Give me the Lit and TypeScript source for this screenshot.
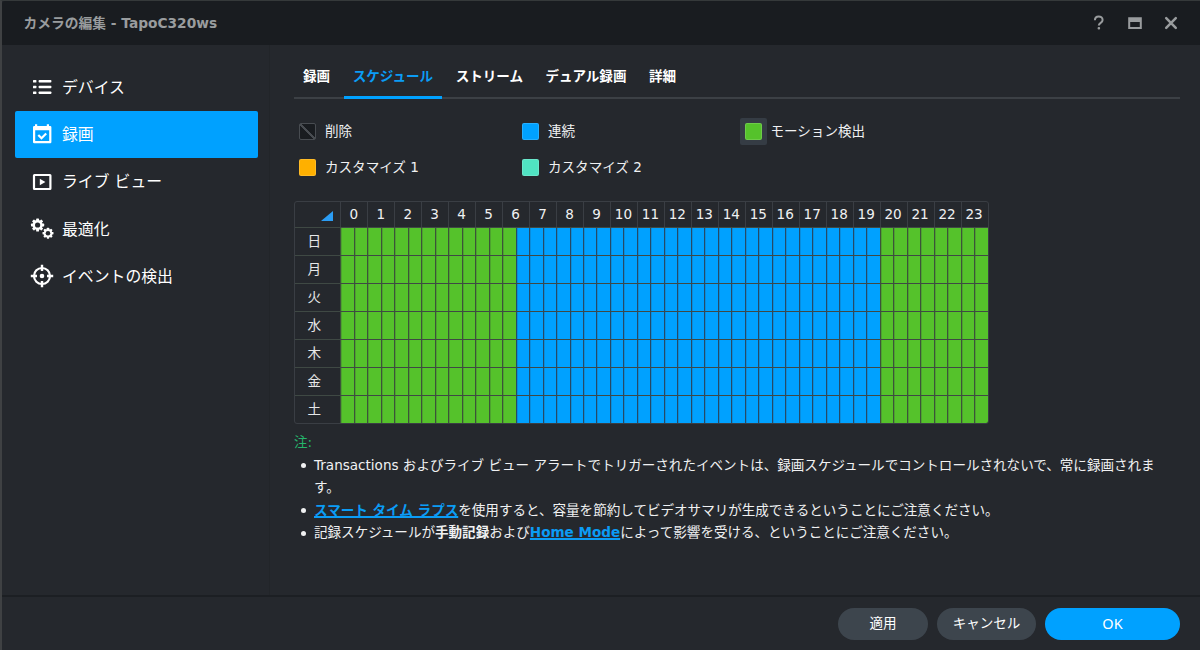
import { LitElement, html, svg, css } from "lit";
import { customElement } from "lit/decorators.js";
import { classMap } from "lit/directives/class-map.js";

const gear = (cx: number, cy: number, r: number, tooth: number, hole: number) => svg`
  <g transform="translate(${cx} ${cy})">
    ${[0, 45, 90, 135].map(
      (a) => svg`<rect x=${-tooth / 2} y=${-r} width=${tooth} height=${r * 2} rx="0.6" transform="rotate(${a})" fill="#fff"/>`
    )}
    <circle r=${r * 0.77} fill="#fff"/>
    <circle r=${hole} fill="#25282d"/>
  </g>`;

const icons = {
  device: svg`<g fill="#fff">
    ${[5, 10.7, 16.4].map((y) => svg`<rect x="3" y=${y} width="3.4" height="2.6" rx=".5"/><rect x="8.6" y=${y} width="12.8" height="2.6" rx=".8"/>`)}
  </g>`,
  record: svg`<path fill="#fff" fill-rule="evenodd" d="M5 2.300h2.200V4h9.600V2.300H19V4h1.200a1.200 1.200 0 0 1 1.200 1.200v14.800a1.200 1.200 0 0 1-1.200 1.200H4.200a1.200 1.200 0 0 1-1.200-1.200V5.200A1.200 1.200 0 0 1 4.200 4H5zM5.200 8.300v10.700h14V8.300z"/>
    <path d="M8.300 13l3.200 3.200 4.700-4.700" fill="none" stroke="#fff" stroke-width="2.200"/>`,
  live: svg`<rect x="4" y="5" width="16.400" height="14" rx=".4" fill="none" stroke="#fff" stroke-width="2.200"/>
    <path d="M9.800 8.700l5.600 3.300-5.600 3.300z" fill="#fff"/>`,
  tune: svg`${gear(7.600, 8, 6.600, 2.900, 2.600)}${gear(18, 16.200, 5.500, 2.400, 2.300)}`,
  detect: svg`<circle cx="12" cy="12" r="8" fill="none" stroke="#fff" stroke-width="2.200"/>
    <circle cx="12" cy="12" r="2.300" fill="#fff"/>
    <path d="M12 .8v6.200M12 17v6.200M.8 12H7M17 12h6.200" stroke="#fff" stroke-width="2.400"/>`,
};

const menu = [
  { icon: icons.device, label: "デバイス" },
  { icon: icons.record, label: "録画", active: true },
  { icon: icons.live, label: "ライブ ビュー" },
  { icon: icons.tune, label: "最適化" },
  { icon: icons.detect, label: "イベントの検出" },
];
const tabs = ["録画", "スケジュール", "ストリーム", "デュアル録画", "詳細"];
const legend = [
  { kind: "none", label: "削除" },
  { kind: "cont", label: "連続" },
  { kind: "motion", label: "モーション検出", active: true },
  { kind: "c1", label: "カスタマイズ 1" },
  { kind: "c2", label: "カスタマイズ 2" },
];
const days = ["日", "月", "火", "水", "木", "金", "土"];
const hours = Array.from({ length: 24 }, (_, i) => i);
const slots = Array.from({ length: 48 }, (_, i) => i);

@customElement("schedule-grid")
export class ScheduleGrid extends LitElement {
  static styles = css`
    :host { display: block; width: 694.500px; }
    .table { box-sizing: border-box; width: 694.500px; height: 223px; border: 1px solid #3a3e44; border-radius: 3px; overflow: hidden; display: grid; grid-template-rows: 25px repeat(7, 28px); }
    .row { display: grid; grid-template-columns: 45.300px 1fr; border-top: 1px solid #3f4944; box-sizing: border-box; }
    .row.head { border-top: 0; }
    .corner { display: flex; justify-content: flex-end; align-items: flex-end; padding: 0 7px 6px 0; }
    .hours { display: grid; grid-template-columns: repeat(24, 1fr); }
    .hour { border-left: 1px solid #3a3e44; display: flex; align-items: center; justify-content: center; color: #f0f1f2; padding: 0 1px 0 0; box-sizing: border-box; }
    .day { display: flex; align-items: center; padding: 0 0 1px 12.500px; color: #e6e7e8; }
    .slots { display: grid; grid-template-columns: repeat(48, 1fr); }
    .slot { border-left: 1px solid #3c5439; background: #55c22b; box-shadow: inset 1px 0 rgba(60, 90, 55, 0.3); }
    .slot.cont { background: #00a1ff; border-left-color: #264a66; box-shadow: inset 1px 0 rgba(40, 80, 110, 0.25); }
  `;
  render() {
    return html`<div class="table">
      <div class="row head">
        <div class="corner"><svg width="12" height="11" viewBox="0 0 12 11"><path d="M12 1v10H0z" fill="#2b9df4"/></svg></div>
        <div class="hours">${hours.map((h) => html`<div class="hour">${h}</div>`)}</div>
      </div>
      ${days.map((d) => html`<div class="row">
        <div class="day">${d}</div>
        <div class="slots">${slots.map((s) => html`<div class=${classMap({ slot: true, cont: s >= 13 && s < 40 })}></div>`)}</div>
      </div>`)}
    </div>`;
  }
}

@customElement("app-root")
export class AppRoot extends LitElement {
  static styles = css`
    :host { display: block; font: 13.56px/22.5px "DejaVu Sans", "Noto Sans CJK JP", sans-serif; color: #f0f1f2; }
    .window { box-sizing: border-box; width: 1200px; height: 650px; border-top: 1px solid #35393a; border-left: 2px solid #3f4143; background: #25282d; display: grid; grid-template-rows: 44px 550px 55px; overflow: hidden; white-space: nowrap; }
    .title { background: #191c20; display: flex; justify-content: space-between; align-items: center; padding: 0 21px 0 21.500px; color: #999c9e; font-weight: bold; border-top-left-radius: 3px; }
    .name { font-size: 13.75px; }
    .tools { display: flex; gap: 20px; }
    svg { display: block; }
    .body { display: grid; grid-template-columns: 268px 1fr; }
    .side { border-right: 1px solid #222529; padding: 18.500px 11px 0 13px; display: flex; flex-direction: column; gap: 0.300px; }
    .item { height: 47px; display: flex; align-items: center; gap: 8px; padding-left: 15px; font-size: 15.85px; border-radius: 2px; color: #fff; }
    .item span { padding-top: 2px; }
    .item.active { background: #00a1ff; }
    .main { padding: 20px 20px 0 24px; }
    .tabs { display: flex; gap: 4.600px; border-bottom: 2px solid #3c4045; height: 32px; }
    .tab { padding: 0 9px; font-weight: bold; color: #fff; height: 32px; box-sizing: border-box; }
    .tab.active { color: #0b9cf5; border-bottom: 3px solid #00a1ff; height: 34px; }
    .legend { display: grid; grid-template-columns: 223px 222.500px 1fr; grid-auto-rows: 36px; padding-top: 14px; }
    .entry { display: flex; align-items: center; gap: 4px; }
    .well { width: 27px; height: 27px; display: grid; place-items: center; border-radius: 2px; }
    .well.active { background: #353c44; }
    .swatch { width: 17px; height: 17px; border-radius: 2px; box-sizing: border-box; border: 1px solid rgba(255, 255, 255, 0.15); }
    .swatch.none { background: linear-gradient(45deg, transparent 46%, #484c51 46%, #484c51 54%, transparent 54%), #191c20; border-color: #484c51; }
    .swatch.cont { background: #00a1ff; }
    .swatch.motion { background: #55c22b; }
    .swatch.c1 { background: #ffb000; }
    .swatch.c2 { background: #50e3c2; }
    .sched { padding-top: 16px; }
    .note { padding-top: 7px; color: #25b56c; }
    .notes { margin: 0; padding: 0 0 0 7px; list-style: none; }
    .notes li { display: flex; gap: 8px; }
    .notes li::before { content: ""; width: 5px; height: 5px; border-radius: 50%; background: #f0f1f2; margin-top: 9.500px; flex: none; }
    .link { color: #0b9cf5; font-weight: bold; text-decoration: underline; text-decoration-thickness: 1.500px; }
    .foot { border-top: 2px solid #1c1f23; display: flex; justify-content: flex-end; align-items: flex-start; gap: 9px; padding: 11px 20px 0 0; }
    .btn { height: 32px; border: 0; border-radius: 16px; background: #3d454d; color: #fff; display: grid; place-items: center; padding: 0 0 2px; font: inherit; }
    .apply { width: 90px; }
    .cancel { width: 99px; }
    .ok { width: 135px; background: #00a1ff; font-family: "Noto Sans", sans-serif; font-size: 14.500px; }
  `;
  render() {
    return html`<div class="window">
      <header class="title">
        <span class="name">カメラの編集 - TapoC320ws</span>
        <div class="tools">
          <svg width="16" height="16" viewBox="0 0 16 16"><path d="M3.900 5.300C3.900 0 11.600.3 11.600 4.900c0 3-3.800 2.900-3.800 5.700" fill="none" stroke="#999c9e" stroke-width="2"/><rect x="6.600" y="12" width="2.500" height="2.500" rx="1" fill="#999c9e"/></svg>
          <svg width="16" height="16" viewBox="0 0 16 16"><path d="M1.200 2.200h13.600v11.800H1.200zM3.200 7v5h9.600V7z" fill="#999c9e" fill-rule="evenodd"/></svg>
          <svg width="16" height="16" viewBox="0 0 16 16"><path d="M3.200 3.200l9.600 9.600M12.800 3.200L3.200 12.800" stroke="#999c9e" stroke-width="2.500" stroke-linecap="round"/></svg>
        </div>
      </header>
      <div class="body">
        <nav class="side">
          ${menu.map((m) => html`<div class=${classMap({ item: true, active: !!m.active })}>
            <svg width="24" height="24" viewBox="0 0 24 24">${m.icon}</svg><span>${m.label}</span>
          </div>`)}
        </nav>
        <main class="main">
          <div class="tabs">${tabs.map((t, i) => html`<div class=${classMap({ tab: true, active: i === 1 })}>${t}</div>`)}</div>
          <div class="legend">${legend.map((l) => html`<div class="entry">
            <div class=${classMap({ well: true, active: !!l.active })}><div class="swatch ${l.kind}"></div></div><span>${l.label}</span>
          </div>`)}</div>
          <div class="sched"><schedule-grid></schedule-grid></div>
          <div class="note">注:</div>
          <ul class="notes">
            <li><div>Transactions およびライブ ビュー アラートでトリガーされたイベントは、録画スケジュールでコントロールされないで、常に録画されま<br>す。</div></li>
            <li><div><a class="link">スマート タイム ラプス</a>を使用すると、容量を節約してビデオサマリが生成できるということにご注意ください。</div></li>
            <li><div>記録スケジュールが<b>手動記録</b>および<a class="link">Home Mode</a>によって影響を受ける、ということにご注意ください。</div></li>
          </ul>
        </main>
      </div>
      <footer class="foot">
        <button class="btn apply">適用</button>
        <button class="btn cancel">キャンセル</button>
        <button class="btn ok">OK</button>
      </footer>
    </div>`;
  }
}
